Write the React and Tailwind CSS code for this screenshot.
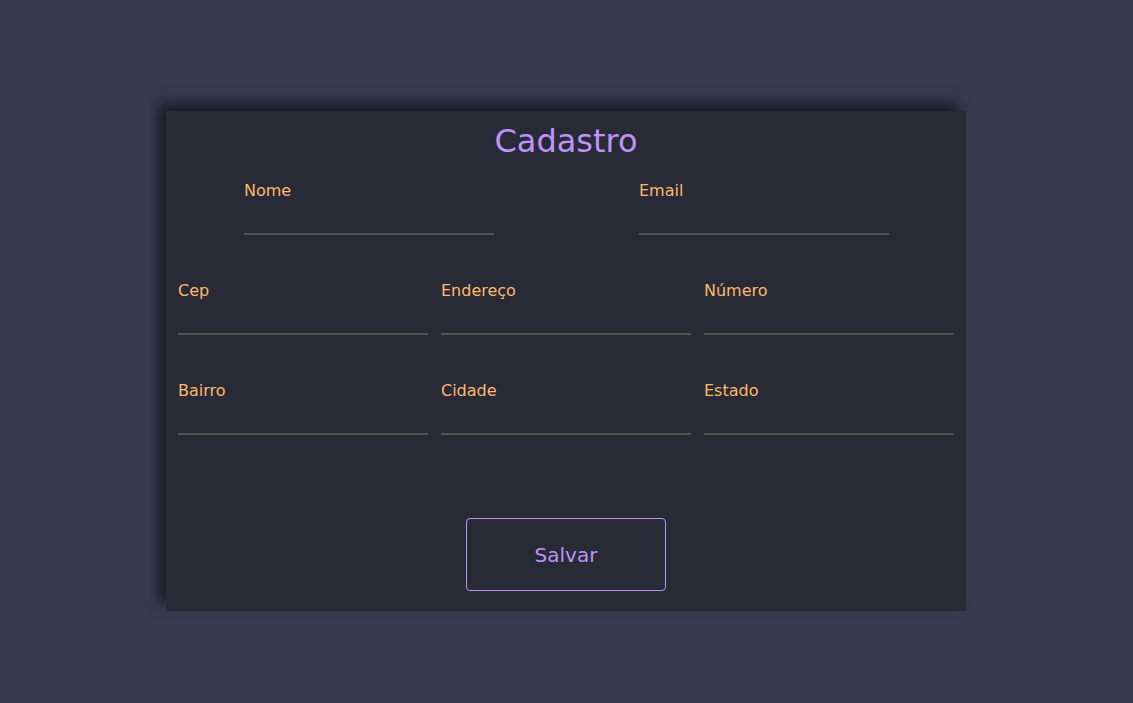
import React from "react";

function Field({ label }) {
  return (
    <div className="flex w-[250px] flex-col">
      <label className="text-[16px] leading-[17px] text-[#ffb86c]">{label}</label>
      <div className="h-[36px] border-b-2 border-[#555555]"></div>
    </div>
  );
}

export default function App() {
  return (
    <div
      className="min-h-[703px] w-full bg-[#383b50] pt-[111px]"
      style={{ fontFamily: '"DejaVu Sans", Verdana, sans-serif' }}
    >
      <div className="ml-[166px] flex h-[500px] w-[800px] flex-col bg-[#282a36] shadow-[-8px_-8px_12px_rgba(0,0,0,0.55)]">
        <h1 className="mt-[12px] text-center text-[32px] leading-[37px] text-[#bd93f9]">Cadastro</h1>
        <div className="mt-[22px] flex pl-[78px] gap-[145px]">
          <Field label="Nome" />
          <Field label="Email" />
        </div>
        <div className="mt-[47px] flex pl-[12px] gap-[13px]">
          <Field label="Cep" />
          <Field label="Endereço" />
          <Field label="Número" />
        </div>
        <div className="mt-[47px] flex pl-[12px] gap-[13px]">
          <Field label="Bairro" />
          <Field label="Cidade" />
          <Field label="Estado" />
        </div>
        <div className="mt-[83px] flex justify-center">
          <button className="h-[73px] w-[200px] rounded-[4px] border border-[#bd93f9] bg-transparent text-[20px] text-[#bd93f9]">
            Salvar
          </button>
        </div>
      </div>
    </div>
  );
}
